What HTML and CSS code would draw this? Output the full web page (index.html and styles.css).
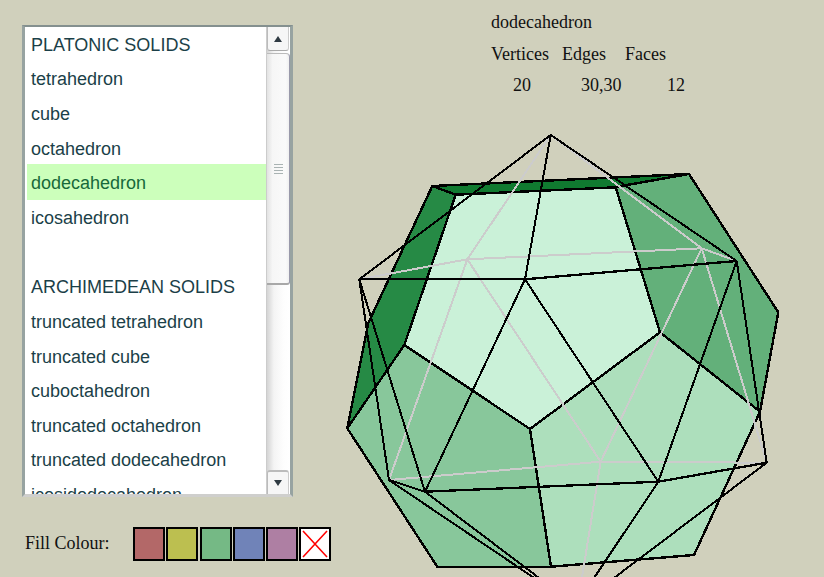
FILE: index.html
```html
<!DOCTYPE html>
<html lang="en">
<head>
<meta charset="utf-8">
<title>Polyhedra</title>
<link rel="stylesheet" href="styles.css">
</head>
<body>
<main class="page">
  <section class="controls">
    <div class="listbox">
      <ul class="items">
        <li class="item">PLATONIC SOLIDS</li>
        <li class="item">tetrahedron</li>
        <li class="item">cube</li>
        <li class="item">octahedron</li>
        <li class="item selected">dodecahedron</li>
        <li class="item">icosahedron</li>
        <li class="item">&nbsp;</li>
        <li class="item">ARCHIMEDEAN SOLIDS</li>
        <li class="item">truncated tetrahedron</li>
        <li class="item">truncated cube</li>
        <li class="item">cuboctahedron</li>
        <li class="item">truncated octahedron</li>
        <li class="item">truncated dodecahedron</li>
        <li class="item">icosidodecahedron</li>
      </ul>
      <div class="scrollbar">
        <div class="sb-btn"><span class="arrow-up"></span></div>
        <div class="thumb"><span class="grip"></span><span class="grip"></span><span class="grip"></span><span class="grip"></span></div>
        <div class="track"></div>
        <div class="sb-btn down"><span class="arrow-down"></span></div>
      </div>
    </div>
    <div class="fill-row">
      <span class="fill-label">Fill Colour:</span>
      <div class="swatches">
        <div class="swatch red"></div>
        <div class="swatch yellow"></div>
        <div class="swatch green"></div>
        <div class="swatch blue"></div>
        <div class="swatch purple"></div>
        <div class="swatch none">
          <svg class="cross" viewBox="0 0 28 30"><path d="M2 2L26 28M26 2L2 28"/></svg>
        </div>
      </div>
    </div>
  </section>
  <section class="viewer">
    <div class="info">
      <div class="solid-name">dodecahedron</div>
      <div class="stats heads"><span class="h-v">Vertices</span><span class="h-e">Edges</span><span class="h-f">Faces</span></div>
      <div class="stats vals"><span class="v-v">20</span><span class="v-e">30,30</span><span class="v-f">12</span></div>
    </div>
    <svg class="solid" viewBox="340 120 484 457" width="484" height="457">
      <g class="face-lines">
        <polygon class="f-top" points="455.7,194.7 615.7,187.3 660,332.3 530,429 404.3,345"/>
        <polygon class="f-back" points="432.3,186 689,174 623,185.7 615.7,187.3 455.7,194.7"/>
        <polygon class="f-left" points="432.3,186 455.7,194.7 404.3,345 347.3,428.3 368.3,323"/>
        <polygon class="f-right" points="689,174 778.3,312.3 760,411.7 660,332.3 615.7,187.3 623,185.7"/>
        <polygon class="f-bl" points="404.3,345 530,429 551,566.7 437.3,566.7 347.3,428.3"/>
        <polygon class="f-br" points="530,429 660,332.3 760,411.7 694,555 551,566.7"/>
      </g>
      <g class="grey-lines">
        <path d="M550.7 135L467.3 259.3M550.7 135L701.7 248.3M359.3 279.3L467.3 259.3L701.7 248.3L736.7 261"/>
        <path d="M467.3 259.3L389 480M467.3 259.3L600.7 461.7M701.7 248.3L600.7 461.7M701.7 248.3L766.7 462.7"/>
        <path d="M389 480L600.7 461.7L766.7 462.7M600.7 461.7L580 590"/>
      </g>
      <g class="thin-lines">
        <path d="M359.3 279.3L550.7 135L736.7 261"/>
        <path d="M550.7 135L525 279.3"/>
        <path d="M525 279.3L425 491.7M525 279.3L658.3 481.7M736.7 261L658.3 481.7"/>
        <path d="M359.3 279.3L389 480L425 491.7L359.3 279.3"/>
        <path d="M736.7 261L766.7 462.7M766.7 462.7L598 590M658.3 481.7L590 584"/>
        <path d="M389 480L552 590M425 491.7L555 590"/>
      </g>
      <g class="heavy-lines">
        <path d="M359.3 279.3L525 279.3L736.7 261"/>
        <path d="M425 491.7L658.3 481.7L766.7 462.7"/>
      </g>
    </svg>
  </section>
</main>
</body>
</html>
```
FILE: styles.css
```css
html, body {
  margin: 0;
  height: 100%;
  overflow: hidden;
  background: #d0d0bc;
}
.page {
  display: flex;
  width: 824px;
  height: 577px;
}
.controls {
  width: 340px;
  flex: none;
  padding: 25px 0 0 22px;
  box-sizing: border-box;
}
.listbox {
  width: 271px;
  height: 472px;
  box-sizing: border-box;
  display: flex;
  background: #fff;
  border-style: solid;
  border-width: 2px 3px 3px 3px;
  border-color: #84908f #97a3a1 #cfcfcd #97a3a1;
  overflow: hidden;
}
.items {
  list-style: none;
  margin: 0;
  padding: 0.6px 0 0 2px;
  width: 241px;
  flex: none;
  box-sizing: border-box;
  overflow: hidden;
  font: 18px/34.67px "Liberation Sans", Arial, sans-serif;
  color: #1b3f48;
}
.item {
  height: 34.67px;
  padding-left: 4px;
  white-space: nowrap;
}
.selected {
  height: 34px;
  margin-bottom: 0.67px;
  background: #ccffbb;
  color: #17693a;
  box-shadow: 0 -2px 0 #ccffbb;
}
.scrollbar {
  flex: 1;
  display: flex;
  flex-direction: column;
  background: linear-gradient(to right, #d4d4d4, #f4f4f4 30%, #fdfdfd 70%, #fff);
  border-left: 1px solid #ccc;
}
.sb-btn {
  height: 24px;
  flex: none;
  margin-right: 1px;
  box-sizing: border-box;
  display: flex;
  align-items: center;
  justify-content: center;
  background: #f6f6f6;
  border-left: 1px solid #bbb;
  border-bottom: 1px solid #aaa;
  border-right: 1px solid #ccc;
  border-radius: 0 0 3px 3px;
}
.down {
  border-bottom: 0;
  border-top: 2px solid #bbb;
  border-radius: 3px 3px 0 0;
}
.arrow-up, .arrow-down {
  width: 0;
  height: 0;
  border-left: 4px solid transparent;
  border-right: 4px solid transparent;
}
.arrow-up { border-bottom: 6px solid #2f3a42; }
.arrow-down { border-top: 6px solid #2f3a42; }
.thumb {
  height: 232px;
  flex: none;
  margin-top: 2px;
  box-sizing: border-box;
  background: linear-gradient(to right, #e2e2e2, #f6f6f6 25%, #fafafa 85%, #f0f0f0);
  border-top: 1px solid #bbb;
  border-right: 1px solid #99a;
  border-bottom: 2px solid #a8a8a8;
  border-radius: 0 4px 3px 0;
  display: flex;
  flex-direction: column;
  align-items: center;
  gap: 2px;
  padding-top: 110px;
}
.grip {
  width: 9px;
  height: 1px;
  background: #a9b3b3;
}
.track { flex: 1; }
.fill-row {
  display: flex;
  align-items: center;
  margin-top: 30px;
  padding-left: 3px;
}
.fill-label {
  width: 108px;
  margin-bottom: 2px;
  font: 18px "Liberation Serif", "Times New Roman", serif;
  color: #111;
}
.swatches {
  display: flex;
  gap: 1px;
}
.swatch {
  width: 32px;
  height: 34px;
  box-sizing: border-box;
  border: 2px solid #000;
}
.red { background: #b36868; }
.yellow { background: #bcbf50; }
.green { background: #75b985; margin-left: 1px; }
.blue { background: #7083b8; }
.purple { background: #ae7fa3; }
.none { background: #fff; }
.cross {
  display: block;
  width: 100%;
  height: 100%;
  fill: none;
  stroke: #ff0000;
  stroke-width: 1.6;
}
.viewer {
  width: 484px;
  flex: none;
}
.info {
  height: 120px;
  padding: 7px 0 0 151px;
  box-sizing: border-box;
  font: 18px/31.5px "Liberation Serif", "Times New Roman", serif;
  color: #111;
}
.stats {
  display: flex;
}
.stats span {
  flex: none;
  box-sizing: border-box;
}
.h-v { width: 71px; }
.h-e { width: 63px; }
.v-v { width: 90px; padding-left: 22px; }
.v-e { width: 86px; }
.solid {
  display: block;
  shape-rendering: crispEdges;
}
.face-lines polygon {
  stroke: #000;
  stroke-width: 2.4;
  stroke-linejoin: miter;
}
.f-top { fill: #caf1d8; }
.f-back { fill: #107a30; }
.f-left { fill: #268a45; }
.f-right { fill: #63b07a; }
.f-bl { fill: #88c79b; }
.f-br { fill: #addfbc; }
.grey-lines path {
  fill: none;
  stroke: #cccccc;
  stroke-width: 2;
}
.thin-lines path {
  fill: none;
  stroke: #000;
  stroke-width: 2;
}
.heavy-lines path {
  fill: none;
  stroke: #000;
  stroke-width: 2.3;
}
```
